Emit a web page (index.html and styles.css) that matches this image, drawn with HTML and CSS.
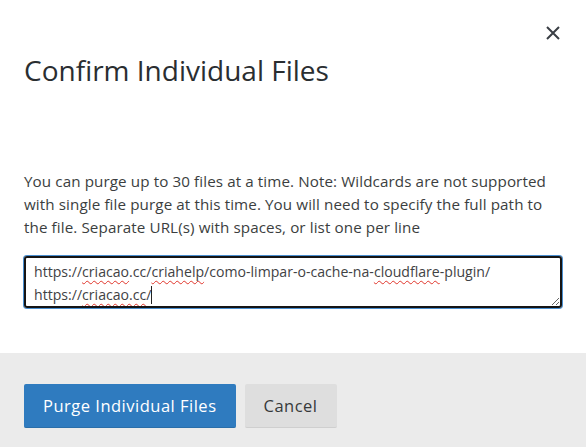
FILE: index.html
```html
<!DOCTYPE html>
<html lang="en">
<head>
<meta charset="utf-8">
<title>Confirm Individual Files</title>
<link rel="stylesheet" href="styles.css">
</head>
<body>
<div class="modal">
  <div class="modal-body">
    <button class="close" aria-label="Close">
      <svg width="14" height="14" viewBox="0 0 14 14"><path d="M1 1 L13 13 M13 1 L1 13" stroke="#3a3f45" stroke-width="2" fill="none"/></svg>
    </button>
    <h2 class="title">Confirm Individual Files</h2>
    <p class="desc">You can purge up to 30 files at a time. Note: Wildcards are not supported with single file purge at this time. You will need to specify the full path to the file. Separate URL(s) with spaces, or list one per line</p>
    <div class="field">
      <div class="textarea">https://<span class="sp">criacao</span>.cc/<span class="sp">criahelp</span>/como-limpar-o-cache-na-<span class="sp">cloudflare</span>-plugin/<br>https://<span class="sp">criacao.cc</span>/<span class="caret"></span></div>
    </div>
  </div>
  <div class="modal-footer">
    <button class="btn btn-primary">Purge Individual Files</button>
    <button class="btn btn-default">Cancel</button>
  </div>
</div>
</body>
</html>
```
FILE: styles.css
```css
html, body {
  margin: 0;
  padding: 0;
  background: #ffffff;
}
body {
  font-family: "Open Sans", "Noto Sans", sans-serif;
  color: #36393a;
}
.modal {
  width: 586px;
  height: 447px;
  display: flex;
  flex-direction: column;
}
.modal-body {
  position: relative;
  padding: 0 24px;
  flex: 1;
}
.close {
  position: absolute;
  top: 26px;
  right: 26px;
  border: 0;
  background: transparent;
  padding: 0;
  width: 14px;
  height: 14px;
  display: flex;
}
.title {
  margin: 0;
  padding-top: 50px;
  font-size: 28px;
  font-weight: 400;
  line-height: 40px;
  color: #2a2e31;
}
.desc {
  margin: 80px 0 0 0;
  font-size: 15.2px;
  letter-spacing: 0.1px;
  line-height: 23px;
  color: #3b3e40;
}
.field {
  margin-top: 17px;
}
.textarea {
  box-sizing: border-box;
  width: 538px;
  height: 52px;
  border: 2px solid #151515;
  border-radius: 3px;
  box-shadow: 0 0 0 1px #4a8fd0;
  padding: 2px 8px;
  font-family: "Open Sans", sans-serif;
  font-size: 14.1px;
  line-height: 23px;
  color: #3f4244;
  resize: both;
  overflow: hidden;
  white-space: nowrap;
}
.sp {
  text-decoration: underline wavy #e0352b;
  text-decoration-thickness: 1px;
  text-underline-offset: 3px;
}
.caret {
  display: inline-block;
  width: 1px;
  height: 18px;
  background: #222;
  vertical-align: -4px;
}
.modal-footer {
  background: #ebebeb;
  height: 94px;
  padding: 31px 24px 0;
  box-sizing: border-box;
  display: flex;
  gap: 9px;
  align-items: flex-start;
}
.btn {
  font-family: "Open Sans", sans-serif;
  font-size: 16.5px;
  letter-spacing: 0.5px;
  height: 44px;
  border: 0;
  border-radius: 2px;
  padding: 0 19px;
  cursor: pointer;
}
.btn-primary {
  background: #2f7bbf;
  color: #ffffff;
  border-bottom: 1px solid #2a6ea9;
}
.btn-default {
  background: #dedede;
  color: #36393a;
  border-bottom: 1px solid #cfcfcf;
}
```
